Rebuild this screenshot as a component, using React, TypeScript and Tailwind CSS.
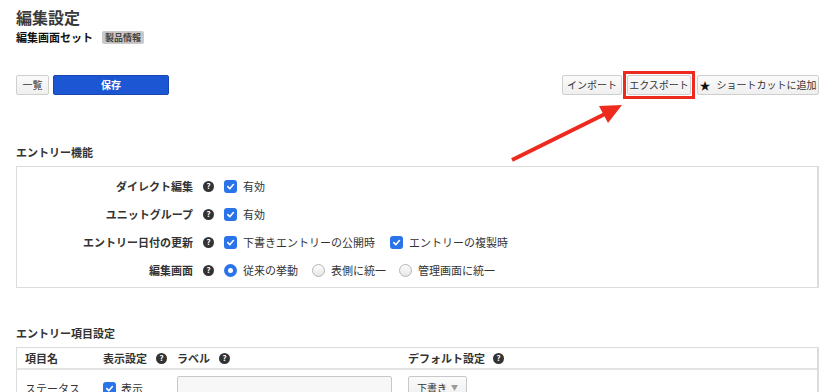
import React from "react";

const font = { fontFamily: '"Noto Sans CJK JP", "Noto Sans", sans-serif' };

function Help() {
  return (
    <span className="inline-flex h-[11px] w-[11px] items-center justify-center rounded-full bg-[#333] text-[8px] font-bold leading-none text-white">
      ?
    </span>
  );
}

function Check() {
  return (
    <span className="inline-flex h-[13px] w-[13px] items-center justify-center rounded-[3px] bg-[#2a74ea]">
      <svg width="9" height="9" viewBox="0 0 10 10">
        <path d="M2 5.2 L4.2 7.4 L8.2 2.8" fill="none" stroke="#fff" strokeWidth="1.8" strokeLinecap="round" strokeLinejoin="round" />
      </svg>
    </span>
  );
}

function Radio({ on }: { on?: boolean }) {
  if (on)
    return (
      <span className="inline-flex h-[13px] w-[13px] items-center justify-center rounded-full bg-[#2a74ea]">
        <span className="h-[5px] w-[5px] rounded-full bg-white" />
      </span>
    );
  return <span className="inline-block h-[13px] w-[13px] rounded-full border border-[#b5b5b5] bg-gradient-to-b from-[#fdfdfd] to-[#e6e6e6]" />;
}

function Btn({ children, className = "" }: { children: React.ReactNode; className?: string }) {
  return (
    <div
      className={
        "flex h-[20px] items-center justify-center rounded-[2px] border border-[#cfcfcf] bg-gradient-to-b from-[#fbfbfb] to-[#efefef] text-[10px] leading-none text-[#333] " +
        className
      }
    >
      {children}
    </div>
  );
}

function Row({ label, children }: { label: string; children: React.ReactNode }) {
  return (
    <div className="flex h-[28px] items-center">
      <div className="w-[177px] pr-[1px] text-right text-[11px] font-bold text-[#333]">{label}</div>
      <div className="ml-[9px] flex items-center">
        <Help />
      </div>
      <div className="ml-[10px] flex items-center text-[11px] text-[#333]">{children}</div>
    </div>
  );
}

export default function App() {
  return (
    <div className="relative h-[392px] w-[835px] overflow-hidden bg-white text-[#333]" style={font}>
      <div className="px-[16px] pt-[6px]">
        <h1 className="text-[16px] font-bold leading-[22px] text-[#3a3a3a]">編集設定</h1>
        <div className="mt-[2px] flex h-[14px] items-center">
          <span className="text-[11px] font-bold leading-none text-[#111]">編集画面セット</span>
          <span className="ml-[9px] rounded-[2px] bg-[#c9c9c9] px-[3px] py-[2px] text-[9px] font-bold leading-none text-[#444]">製品情報</span>
        </div>

        <div className="mt-[27px] flex items-center justify-between">
          <div className="flex items-center gap-[4px]">
            <Btn className="w-[33px]">一覧</Btn>
            <div className="flex h-[20px] w-[116px] items-center justify-center rounded-[2px] border border-[#1847b0] bg-[#1c56d2] text-[10px] font-bold leading-none text-white">
              保存
            </div>
          </div>
          <div className="flex items-center">
            <Btn className="w-[60px]">インポート</Btn>
            <div className="ml-[1px] h-[28px] w-[72px] border-[3px] border-[#ec2a1e] p-[1px]">
              <Btn className="w-full">エクスポート</Btn>
            </div>
            <Btn className="ml-[2px] w-[122px] gap-[6px]">
              <span className="text-[11px] text-[#111]">★</span>
              <span>ショートカットに追加</span>
            </Btn>
          </div>
        </div>

        <div className="mt-[46px] text-[11px] font-bold leading-[14px]">エントリー機能</div>
        <div className="mt-[7px] border border-r-2 border-[#dcdcdc] pb-[3px] pt-[5px]">
          <Row label="ダイレクト編集">
            <Check />
            <span className="ml-[6px]">有効</span>
          </Row>
          <Row label="ユニットグループ">
            <Check />
            <span className="ml-[6px]">有効</span>
          </Row>
          <Row label="エントリー日付の更新">
            <Check />
            <span className="ml-[6px]">下書きエントリーの公開時</span>
            <span className="ml-[15px]">
              <Check />
            </span>
            <span className="ml-[6px]">エントリーの複製時</span>
          </Row>
          <Row label="編集画面">
            <Radio on />
            <span className="ml-[6px]">従来の挙動</span>
            <span className="ml-[14px] flex">
              <Radio />
            </span>
            <span className="ml-[6px]">表側に統一</span>
            <span className="ml-[13px] flex">
              <Radio />
            </span>
            <span className="ml-[6px]">管理画面に統一</span>
          </Row>
        </div>

        <div className="mt-[38px] text-[11px] font-bold leading-[14px]">エントリー項目設定</div>
        <div className="mt-[7px] border border-r-2 border-[#dcdcdc]">
          <div className="grid h-[22px] grid-cols-[78px_74px_231px_1fr] items-center border-b-2 border-[#e3e3e3] pl-[8px] text-[11px] font-bold">
            <div>項目名</div>
            <div className="flex items-center gap-[9px]">
              <span>表示設定</span>
              <Help />
            </div>
            <div className="flex items-center gap-[9px]">
              <span>ラベル</span>
              <Help />
            </div>
            <div className="flex items-center gap-[8px]">
              <span>デフォルト設定</span>
              <Help />
            </div>
          </div>
          <div className="grid h-[40px] grid-cols-[78px_74px_231px_1fr] items-start pl-[8px] pt-[6px] text-[11px]">
            <div className="pt-[4px]">ステータス</div>
            <div className="flex items-center pt-[4px]">
              <Check />
              <span className="ml-[5px]">表示</span>
            </div>
            <div className="h-[24px] w-[215px] rounded-[2px] border border-[#c8c8c8] bg-[#f7f7f7]" />
            <div className="flex h-[22px] w-[59px] items-center justify-between rounded-[2px] border border-[#c8c8c8] bg-gradient-to-b from-[#fbfbfb] to-[#efefef] px-[8px] text-[10px]">
              <span>下書き</span>
              <span className="text-[7px] text-[#999]">▼</span>
            </div>
          </div>
        </div>
      </div>

      <svg className="pointer-events-none absolute left-0 top-0" width="835" height="392">
        <line x1="512" y1="160" x2="607" y2="113" stroke="#ee2a1e" strokeWidth="4" />
        <polygon points="622,105 599,106 608,123" fill="#ee2a1e" />
      </svg>
    </div>
  );
}
